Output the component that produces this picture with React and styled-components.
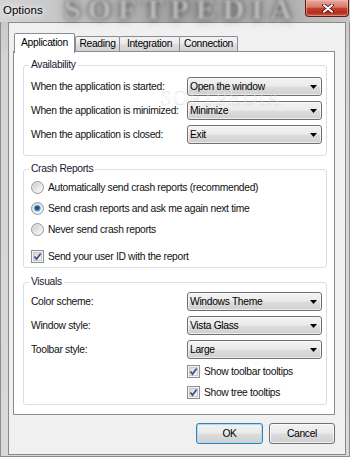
import React from "react";
import styled, { createGlobalStyle } from "styled-components";

const FONT = `"Liberation Sans", Arial, sans-serif`;

const GlobalStyle = createGlobalStyle`
  html, body {
    margin: 0;
    padding: 0;
    background: #fff;
  }
  body {
    font-family: ${FONT};
    font-size: 10.3px;
    letter-spacing: -0.32px;
    color: #111;
  }
  * {
    box-sizing: border-box;
  }
`;

const tabs = [
  { label: "Application", w: 61 },
  { label: "Reading", w: 45 },
  { label: "Integration", w: 61 },
  { label: "Connection", w: 59 },
];

const availability = [
  ["When the application is started:", "Open the window"],
  ["When the application is minimized:", "Minimize"],
  ["When the application is closed:", "Exit"],
];

const crashOptions = [
  ["Automatically send crash reports (recommended)", false],
  ["Send crash reports and ask me again next time", true],
  ["Never send crash reports", false],
];

const visuals = [
  ["Color scheme:", "Windows Theme"],
  ["Window style:", "Vista Glass"],
  ["Toolbar style:", "Large"],
];

const RadioIcon = ({ checked }) => (
  <svg width="13" height="13" viewBox="0 0 13 13">
    <defs>
      <linearGradient id="radioRing" x1="0" y1="0" x2="1" y2="1">
        <stop offset="0" stopColor="#d8d8d8" />
        <stop offset="1" stopColor="#f6f6f6" />
      </linearGradient>
      <linearGradient id="radioFace" x1="0" y1="0" x2="1" y2="1">
        <stop offset="0" stopColor="#cfcfcf" />
        <stop offset="1" stopColor="#fafafa" />
      </linearGradient>
      <radialGradient id="radioDot" cx="0.45" cy="0.4" r="0.6">
        <stop offset="0" stopColor="#0c3263" />
        <stop offset="0.55" stopColor="#2a6db4" />
        <stop offset="1" stopColor="#9fd6fb" />
      </radialGradient>
    </defs>
    <circle cx="6.5" cy="6.5" r="6" fill="url(#radioRing)" stroke="#9a9a9a" />
    <circle cx="6.5" cy="6.5" r="4.2" fill="url(#radioFace)" />
    {checked && <circle cx="6.5" cy="6.5" r="3.3" fill="url(#radioDot)" />}
  </svg>
);

const CheckIcon = () => (
  <svg width="13" height="13" viewBox="0 0 13 13">
    <defs>
      <linearGradient id="checkFace" x1="0" y1="0" x2="1" y2="1">
        <stop offset="0" stopColor="#d6d6d6" />
        <stop offset="1" stopColor="#f8f8f8" />
      </linearGradient>
    </defs>
    <rect x="0.5" y="0.5" width="12" height="12" fill="#f4f4f4" stroke="#8e8f8f" />
    <rect x="2.5" y="2.5" width="8" height="8" fill="url(#checkFace)" stroke="#c9c9c9" />
    <path d="M3.4 6.5 L5.5 9.1 L9.7 3.4" fill="none" stroke="#3a4f8f" strokeWidth="1.7" />
  </svg>
);

const ComboArrow = () => (
  <svg width="7" height="4" viewBox="0 0 7 4">
    <path d="M0 0 H7 L3.5 4 Z" fill="#000" />
  </svg>
);

const CloseGlyph = () => (
  <svg width="12" height="9" viewBox="0 0 12 9">
    <path d="M2 1.2 L10 7.8 M10 1.2 L2 7.8" stroke="#4b1610" strokeWidth="3.6" strokeLinecap="round" />
    <path d="M2 1.2 L10 7.8 M10 1.2 L2 7.8" stroke="#fff" strokeWidth="2" strokeLinecap="round" />
  </svg>
);

export default function App() {
  return (
    <>
      <GlobalStyle />
      <Window>
        <TitleBar>
          <Title>Options</Title>
          <Watermark>SOFTPEDIA</Watermark>
          <CloseButton>
            <CloseGlyph />
          </CloseButton>
        </TitleBar>

        <Client>
          <TabStrip>
            {tabs.map((t, i) => (
              <Tab key={t.label} $active={i === 0} $w={t.w} $first={i < 2}>
                {t.label}
              </Tab>
            ))}
          </TabStrip>

          <Panel>
            <Group $pt={5} $pb={11}>
              <Legend>Availability</Legend>
              <FieldList>
                {availability.map(([label, value]) => (
                  <FieldRow key={label}>
                    <FieldLabel>{label}</FieldLabel>
                    <Combo>
                      <span>{value}</span>
                      <ComboArrow />
                    </Combo>
                  </FieldRow>
                ))}
              </FieldList>
            </Group>

            <Group $pt={1} $pb={0} $mt={6}>
              <Legend>Crash Reports</Legend>
              {crashOptions.map(([label, checked]) => (
                <OptionRow key={label}>
                  <RadioIcon checked={checked} />
                  <span>{label}</span>
                </OptionRow>
              ))}
              <OptionRow $mt={6}>
                <CheckIcon />
                <span>Send your user ID with the report</span>
              </OptionRow>
            </Group>

            <Group $pt={3} $pb={1} $mt={7}>
              <Legend>Visuals</Legend>
              <FieldList>
                {visuals.map(([label, value]) => (
                  <FieldRow key={label}>
                    <FieldLabel>{label}</FieldLabel>
                    <Combo>
                      <span>{value}</span>
                      <ComboArrow />
                    </Combo>
                  </FieldRow>
                ))}
              </FieldList>
              <OptionRow $indent={156} $mt={2}>
                <CheckIcon />
                <span>Show toolbar tooltips</span>
              </OptionRow>
              <OptionRow $indent={156}>
                <CheckIcon />
                <span>Show tree tooltips</span>
              </OptionRow>
            </Group>
          </Panel>

          <ButtonBar>
            <Button $default $w={67}>OK</Button>
            <Button $w={66}>Cancel</Button>
          </ButtonBar>
        </Client>

        <ScreenMark>SOFTPEDIA</ScreenMark>
      </Window>
    </>
  );
}

const Window = styled.div`
  position: relative;
  width: 350px;
  height: 457px;
  overflow: hidden;
  display: flex;
  flex-direction: column;
  background: linear-gradient(180deg, #b4b4b4 0px, #c9c9c9 22px, #d4d4d4 60px, #d9d9d9 100%);
  box-shadow: inset 1px 0 0 #8d8d8d, inset -1px 0 0 #8d8d8d, inset 0 -1px 0 #8d8d8d;
`;

const TitleBar = styled.div`
  position: relative;
  height: 22px;
  flex: none;
  display: flex;
  justify-content: space-between;
  align-items: flex-start;
  padding: 0 1px 0 3px;
  background: linear-gradient(90deg, #d4d4d4 0px, #c6c6c6 60px, #a4a4a4 180px, #b4b4b4 300px, #c6c6c6 100%);
`;

const Title = styled.div`
  position: relative;
  z-index: 1;
  padding-top: 4px;
  font-size: 11.5px;
  letter-spacing: 0;
  color: #000;
  text-shadow: 0 0 5px #fff, 0 0 8px #fff;
`;

const Watermark = styled.div`
  position: absolute;
  left: 64px;
  top: -6px;
  font-family: "Liberation Serif", "Times New Roman", serif;
  font-weight: bold;
  font-size: 30px;
  line-height: 30px;
  letter-spacing: 7px;
  color: rgba(225, 225, 225, 0.8);
  text-shadow: 0 0 3px rgba(30, 30, 30, 0.9), 0 0 8px rgba(50, 50, 50, 0.7);
  filter: blur(1.4px);
  pointer-events: none;
`;

const CloseButton = styled.div`
  position: relative;
  z-index: 1;
  width: 44px;
  height: 17px;
  display: flex;
  align-items: center;
  justify-content: center;
  padding-left: 2px;
  border: 1px solid #5e1e17;
  border-top: none;
  border-radius: 0 0 4px 4px;
  background: linear-gradient(180deg, #e9aaa0 0%, #d9786b 45%, #c3412f 52%, #b22f1e 80%, #cf5c49 100%);
  box-shadow: inset 0 0 0 1px rgba(255, 200, 190, 0.45);
`;

const Client = styled.div`
  flex: 1;
  margin: 0 4px 2px 8px;
  display: flex;
  flex-direction: column;
  padding: 10px 10px 10px 4px;
  background: #f0f0f0;
  border: 1px solid #8a8a8a;
`;

const TabStrip = styled.div`
  position: relative;
  z-index: 2;
  height: 18px;
  flex: none;
  display: flex;
  align-items: flex-end;
  padding-left: 1px;
`;

const Tab = styled.div`
  width: ${(p) => p.$w}px;
  height: ${(p) => (p.$active ? 20 : 15)}px;
  margin-bottom: ${(p) => (p.$active ? -2 : 0)}px;
  margin-left: ${(p) => (p.$first ? 0 : -1)}px;
  padding-top: ${(p) => (p.$active ? 2 : 0)}px;
  line-height: 14px;
  text-align: center;
  color: #000;
  border: 1px solid #898c95;
  border-bottom: none;
  border-radius: 2px 2px 0 0;
  background: ${(p) =>
    p.$active
      ? "#fff"
      : "linear-gradient(180deg, #f3f3f3 0%, #ebebeb 45%, #dddddd 55%, #d2d2d2 100%)"};
`;

const Panel = styled.div`
  height: 364px;
  flex: none;
  display: flex;
  flex-direction: column;
  padding: 6px 7px 9px 9px;
  background: #fff;
  border: 1px solid #898c95;
`;

const Group = styled.fieldset`
  margin: ${(p) => p.$mt || 0}px 0 0;
  padding: ${(p) => p.$pt}px 4px ${(p) => p.$pb}px 7px;
  border: 1px solid #d5dfe5;
  border-radius: 3px;
  min-width: 0;
`;

const Legend = styled.legend`
  margin-left: -2px;
  padding: 0 2px;
  line-height: 14px;
  color: #16202c;
`;

const FieldList = styled.div`
  display: flex;
  flex-direction: column;
  gap: 5px;
`;

const FieldRow = styled.div`
  display: flex;
  align-items: center;
  height: 19px;
`;

const FieldLabel = styled.div`
  flex: 1;
  color: #111;
`;

const Combo = styled.div`
  width: 135px;
  height: 19px;
  display: flex;
  align-items: center;
  justify-content: space-between;
  padding: 0 4px 0 2px;
  color: #000;
  border: 1px solid #707070;
  border-radius: 3px;
  background: linear-gradient(180deg, #f2f2f2 0%, #ebebeb 48%, #dddddd 52%, #cfcfcf 100%);
  box-shadow: inset 0 0 0 1px rgba(255, 255, 255, 0.6);
`;

const OptionRow = styled.div`
  display: flex;
  align-items: center;
  gap: 4px;
  height: 21px;
  margin-top: ${(p) => p.$mt || 0}px;
  padding-left: ${(p) => p.$indent || 0}px;
  color: #111;
`;

const ButtonBar = styled.div`
  display: flex;
  justify-content: flex-end;
  gap: 6px;
  margin-top: 8px;
`;

const Button = styled.div`
  width: ${(p) => p.$w}px;
  height: 21px;
  display: flex;
  align-items: center;
  justify-content: center;
  color: #000;
  border: 1px solid ${(p) => (p.$default ? "#3c7fb1" : "#707070")};
  border-radius: 3px;
  background: linear-gradient(180deg, #f2f2f2 0%, #ebebeb 48%, #dddddd 52%, #cfcfcf 100%);
  box-shadow: inset 0 0 0 1px ${(p) => (p.$default ? "#a8dcf5" : "rgba(255, 255, 255, 0.7)")};
`;

const ScreenMark = styled.div`
  position: absolute;
  left: 160px;
  top: 86px;
  font-family: "Liberation Serif", "Times New Roman", serif;
  font-size: 21px;
  letter-spacing: 1px;
  color: rgba(255, 255, 255, 0.3);
  -webkit-text-stroke: 0.5px rgba(150, 150, 150, 0.28);
  pointer-events: none;
`;
